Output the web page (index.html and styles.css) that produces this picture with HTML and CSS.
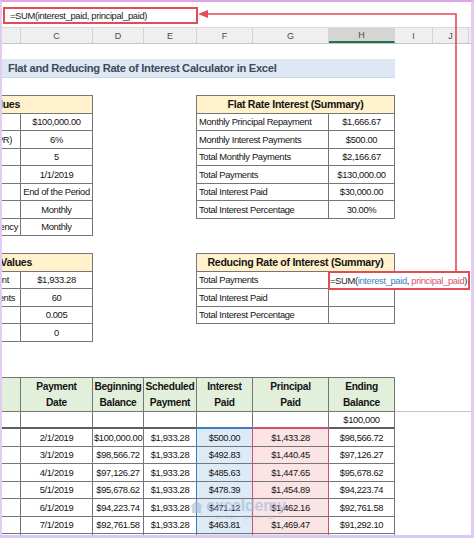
FILE: index.html
```html
<!DOCTYPE html>
<html>
<head>
<meta charset="utf-8">
<title>Flat and Reducing Rate of Interest Calculator in Excel</title>
<link rel="stylesheet" href="styles.css">
</head>
<body>
<div class="frame">
  <div class="fbar"><div class="fbox">=SUM(interest_paid, principal_paid)</div></div>

  <div class="grid cols">
    <div class="ch"></div><div class="ch">C</div><div class="ch">D</div><div class="ch">E</div><div class="ch">F</div><div class="ch">G</div><div class="ch sel">H</div><div class="ch">I</div><div class="ch">J</div><div class="ch end"></div>
  </div>

  <div class="grid title-row"><div class="title">Flat and Reducing Rate of Interest Calculator in Excel</div></div>

  <div class="grid sec sec1">
    <table class="t left">
      <colgroup><col class="w19"><col class="w72"></colgroup>
      <tr><th colspan="2" class="hd cl"><div class="clip pr72">Input Values</div></th></tr>
      <tr><td class="lb"></td><td class="v">$100,000.00</td></tr>
      <tr><td class="lb"><div class="clip pr8">Interest Rate (APR)</div></td><td class="v">6%</td></tr>
      <tr><td class="lb"></td><td class="v">5</td></tr>
      <tr><td class="lb"></td><td class="v">1/1/2019</td></tr>
      <tr><td class="lb"></td><td class="v">End of the Period</td></tr>
      <tr><td class="lb"></td><td class="v">Monthly</td></tr>
      <tr><td class="lb"><div class="clip pr2">Payment Frequency</div></td><td class="v">Monthly</td></tr>
    </table>
    <table class="t right">
      <colgroup><col class="w132"><col class="w66"></colgroup>
      <tr><th colspan="2" class="hd">Flat Rate Interest (Summary)</th></tr>
      <tr><td class="l">Monthly Principal Repayment</td><td class="v">$1,666.67</td></tr>
      <tr><td class="l">Monthly Interest Payments</td><td class="v">$500.00</td></tr>
      <tr><td class="l">Total Monthly Payments</td><td class="v">$2,166.67</td></tr>
      <tr><td class="l">Total Payments</td><td class="v">$130,000.00</td></tr>
      <tr><td class="l">Total Interest Paid</td><td class="v">$30,000.00</td></tr>
      <tr><td class="l">Total Interest Percentage</td><td class="v">30.00%</td></tr>
    </table>
  </div>

  <div class="grid sec sec2">
    <table class="t left">
      <colgroup><col class="w19"><col class="w72"></colgroup>
      <tr><th colspan="2" class="hd cl"><div class="clip pr60">Output Values</div></th></tr>
      <tr><td class="lb"><div class="clip pr11">Monthly Payment</div></td><td class="v">$1,933.28</td></tr>
      <tr><td class="lb"><div class="clip pr5">Number of Payments</div></td><td class="v">60</td></tr>
      <tr><td class="lb"></td><td class="v">0.005</td></tr>
      <tr><td class="lb"></td><td class="v">0</td></tr>
    </table>
    <table class="t right">
      <colgroup><col class="w132"><col class="w66"></colgroup>
      <tr><th colspan="2" class="hd">Reducing Rate of Interest (Summary)</th></tr>
      <tr><td class="l">Total Payments</td><td class="v hv"><div class="selbox">=SUM(<span class="fx-b">interest_paid</span>, <span class="fx-r">principal_paid</span>)</div></td></tr>
      <tr><td class="l">Total Interest Paid</td><td class="v"></td></tr>
      <tr><td class="l">Total Interest Percentage</td><td class="v"></td></tr>
    </table>
  </div>

  <table class="amort">
    <colgroup><col class="w19"><col class="w72"><col class="w51"><col class="w53"><col class="w56"><col class="w76"><col class="w66"><col class="w76"></colgroup>
    <tr class="hr"><th></th><th>Payment<br>Date</th><th>Beginning<br>Balance</th><th>Scheduled<br>Payment</th><th>Interest<br>Paid</th><th>Principal<br>Paid</th><th>Ending<br>Balance</th><th class="x"></th></tr>
    <tr class="br"><td></td><td></td><td></td><td></td><td class="fb"></td><td class="gb"></td><td>$100,000</td><td class="x"></td></tr>
    <tr><td></td><td>2/1/2019</td><td>$100,000.00</td><td class="e">$1,933.28</td><td class="f">$500.00</td><td class="g">$1,433.28</td><td>$98,566.72</td><td class="x"></td></tr>
    <tr><td></td><td>3/1/2019</td><td>$98,566.72</td><td class="e">$1,933.28</td><td class="f">$492.83</td><td class="g">$1,440.45</td><td>$97,126.27</td><td class="x"></td></tr>
    <tr><td></td><td>4/1/2019</td><td>$97,126.27</td><td class="e">$1,933.28</td><td class="f">$485.63</td><td class="g">$1,447.65</td><td>$95,678.62</td><td class="x"></td></tr>
    <tr><td></td><td>5/1/2019</td><td>$95,678.62</td><td class="e">$1,933.28</td><td class="f">$478.39</td><td class="g">$1,454.89</td><td>$94,223.74</td><td class="x"></td></tr>
    <tr><td></td><td>6/1/2019</td><td>$94,223.74</td><td class="e">$1,933.28</td><td class="f">$471.12</td><td class="g">$1,462.16</td><td>$92,761.58</td><td class="x"></td></tr>
    <tr><td></td><td>7/1/2019</td><td>$92,761.58</td><td class="e">$1,933.28</td><td class="f">$463.81</td><td class="g">$1,469.47</td><td>$91,292.10</td><td class="x"></td></tr>
    <tr><td></td><td>8/1/2019</td><td>$91,292.10</td><td class="e">$1,933.28</td><td class="f">$456.46</td><td class="g">$1,476.82</td><td>$89,815.28</td><td class="x"></td></tr>
  </table>

  <div class="wm">
    <svg class="wm-ic" viewBox="0 0 16 16" width="15" height="15"><path d="M1 8 L8 1.5 L15 8 L13 8 L13 15 L3 15 L3 8 Z" fill="#a9bcd6"/></svg>
    <div class="wm-t"><div class="wm-n">exceldemy</div><div class="wm-s">EXCEL · DATA · BI</div></div>
  </div>

  <svg class="arrow" width="474" height="538" viewBox="0 0 474 538">
    <polyline points="207,14 456,14 456,271" fill="none" stroke="#e34b55" stroke-width="1.6"/>
    <polygon points="198,14 208,10 208,18" fill="#e34b55"/>
  </svg>
</div>
</body>
</html>
```

FILE: styles.css
```css
* { box-sizing: border-box; }
html, body { margin: 0; padding: 0; background: #fff; }
body {
  font-family: "Liberation Sans", Arial, sans-serif;
  color: #141414;
}
.frame {
  position: relative;
  width: 474px;
  height: 538px;
  overflow: hidden;
  border-style: solid;
  border-color: #dea6e2 #e2cdf2 #d8cbf3 #e2cdf2;
  border-width: 2px 3px 3px 2px;
  background: #fff;
}
.fbar { height: 25px; padding: 5px 0 0 1px; }
.fbox {
  width: 195px;
  height: 17px;
  border: 2px solid #e34b55;
  font-size: 9.4px;
  letter-spacing: -0.35px;
  line-height: 13px;
  padding-left: 5px;
  white-space: nowrap;
  color: #1a1a1a;
}
.grid {
  display: grid;
  grid-template-columns: 19px 72px 51px 53px 56px 76px 66px 38px 36px 1fr;
}
.cols {
  height: 17px;
  border-top: 1px solid #d9d9d9;
  border-bottom: 1px solid #c6c6c6;
  background: #efefef;
}
.ch {
  border-right: 1px solid #d3d3d3;
  font-size: 9px;
  color: #4a4a4a;
  display: flex;
  align-items: center;
  justify-content: center;
}
.ch.sel { background: #d5d5d5; border-bottom: 2px solid #217346; }
.ch.end { border-right: none; }

.title-row { margin-top: 15px; }
.title {
  grid-column: 1 / 8;
  height: 19px;
  background: #dde8f4;
  border-bottom: 1px solid #c9d8ea;
  font-weight: bold;
  font-size: 11.2px;
  letter-spacing: -0.3px;
  line-height: 18px;
  color: #3f4957;
  padding-left: 6px;
  white-space: nowrap;
}

.sec { align-items: start; }
.sec1 { margin-top: 17px; }
.sec2 { margin-top: 17px; }

.t {
  border-collapse: separate;
  border-spacing: 0;
  table-layout: fixed;
  border-top: 1px solid #767676;
}
.t td, .t th {
  height: 17.5px;
  padding: 0 2px;
  border-right: 1px solid #767676;
  border-bottom: 1px solid #767676;
  white-space: nowrap;
  overflow: hidden;
  font-size: 9.4px;
  letter-spacing: -0.35px;
  font-weight: normal;
  vertical-align: middle;
}
.t th.hd {
  background: #fff2cc;
  font-weight: bold;
  font-size: 10.6px;
  letter-spacing: -0.3px;
  text-align: center;
  color: #141414;
}
.t th.cl, .t td.lb { padding: 0; }
.left { grid-column: 1 / 3; width: 91px; }
.right {
  grid-column: 5 / 8;
  width: 199px;
  margin-left: -1px;
  border-left: 1px solid #767676;
}
col.w19 { width: 19px; }
col.w72 { width: 72px; }
col.w51 { width: 51px; }
col.w53 { width: 53px; }
col.w56 { width: 56px; }
col.w76 { width: 76px; }
col.w66 { width: 66px; }
col.w132 { width: 132px; }

.clip {
  display: flex;
  justify-content: flex-end;
  overflow: hidden;
  white-space: nowrap;
}
.pr2 { padding-right: 2px; }
.pr5 { padding-right: 5px; }
.pr8 { padding-right: 8px; }
.pr11 { padding-right: 11px; }
.pr60 { padding-right: 60px; }
.pr72 { padding-right: 72px; }

.t td.v { text-align: center; }
.t td.l { text-align: left; padding-left: 2px; }
.t td.hv { position: relative; overflow: visible; }
.selbox {
  position: absolute;
  left: -1px;
  top: -1px;
  width: 142px;
  height: 19px;
  border: 2px solid #e34b55;
  background: #fff;
  font-size: 9.4px;
  letter-spacing: -0.35px;
  line-height: 15px;
  text-align: left;
  white-space: nowrap;
  color: #1a1a1a;
}
.fx-b { color: #3b7fc4; }
.fx-r { color: #d4586b; }

.amort {
  margin-top: 35.5px;
  width: 469px;
  border-collapse: separate;
  border-spacing: 0;
  table-layout: fixed;
}
.amort td, .amort th {
  height: 17.5px;
  padding: 0 1px;
  border-right: 1px solid #767676;
  border-bottom: 1px solid #767676;
  white-space: nowrap;
  overflow: hidden;
  font-size: 9.4px;
  letter-spacing: -0.35px;
  text-align: center;
  vertical-align: middle;
}
.amort .hr th {
  height: 35px;
  background: #e2efda;
  border-top: 1px solid #767676;
  font-weight: bold;
  font-size: 10.2px;
  letter-spacing: -0.3px;
  line-height: 16px;
  color: #141414;
}
.amort .hr th.x {
  background: none;
  border-top: none;
  border-right: none;
  border-bottom: 1px solid #c6bfdc;
}
.amort .br td {
  height: 17px;
  border-bottom: 2px solid #5f5f5f;
}
.amort .br td.fb { border-bottom-color: #3b7dc0; }
.amort .br td.gb { border-bottom-color: #c5566e; }
.amort td.x, .amort .br td.x { border: none; }
.amort td.e { border-right-color: #3b7dc0; }
.amort td.f { background: #ddebf7; border-right-color: #c5566e; }
.amort td.g { background: #fbe4e6; border-right-color: #c5566e; }

.wm {
  position: absolute;
  left: 187px;
  top: 495px;
  display: flex;
  align-items: flex-start;
  gap: 2px;
  opacity: 0.6;
  pointer-events: none;
}
.wm-ic { margin-top: 2px; }
.wm-n {
  font-size: 16px;
  font-weight: bold;
  color: #a3b9d6;
  line-height: 17px;
  letter-spacing: -0.2px;
}
.wm-s {
  font-size: 5px;
  letter-spacing: 1px;
  color: #b0bfd3;
  padding-left: 10px;
  line-height: 6px;
}
.arrow {
  position: absolute;
  left: -2px;
  top: -2px;
  pointer-events: none;
}
```
